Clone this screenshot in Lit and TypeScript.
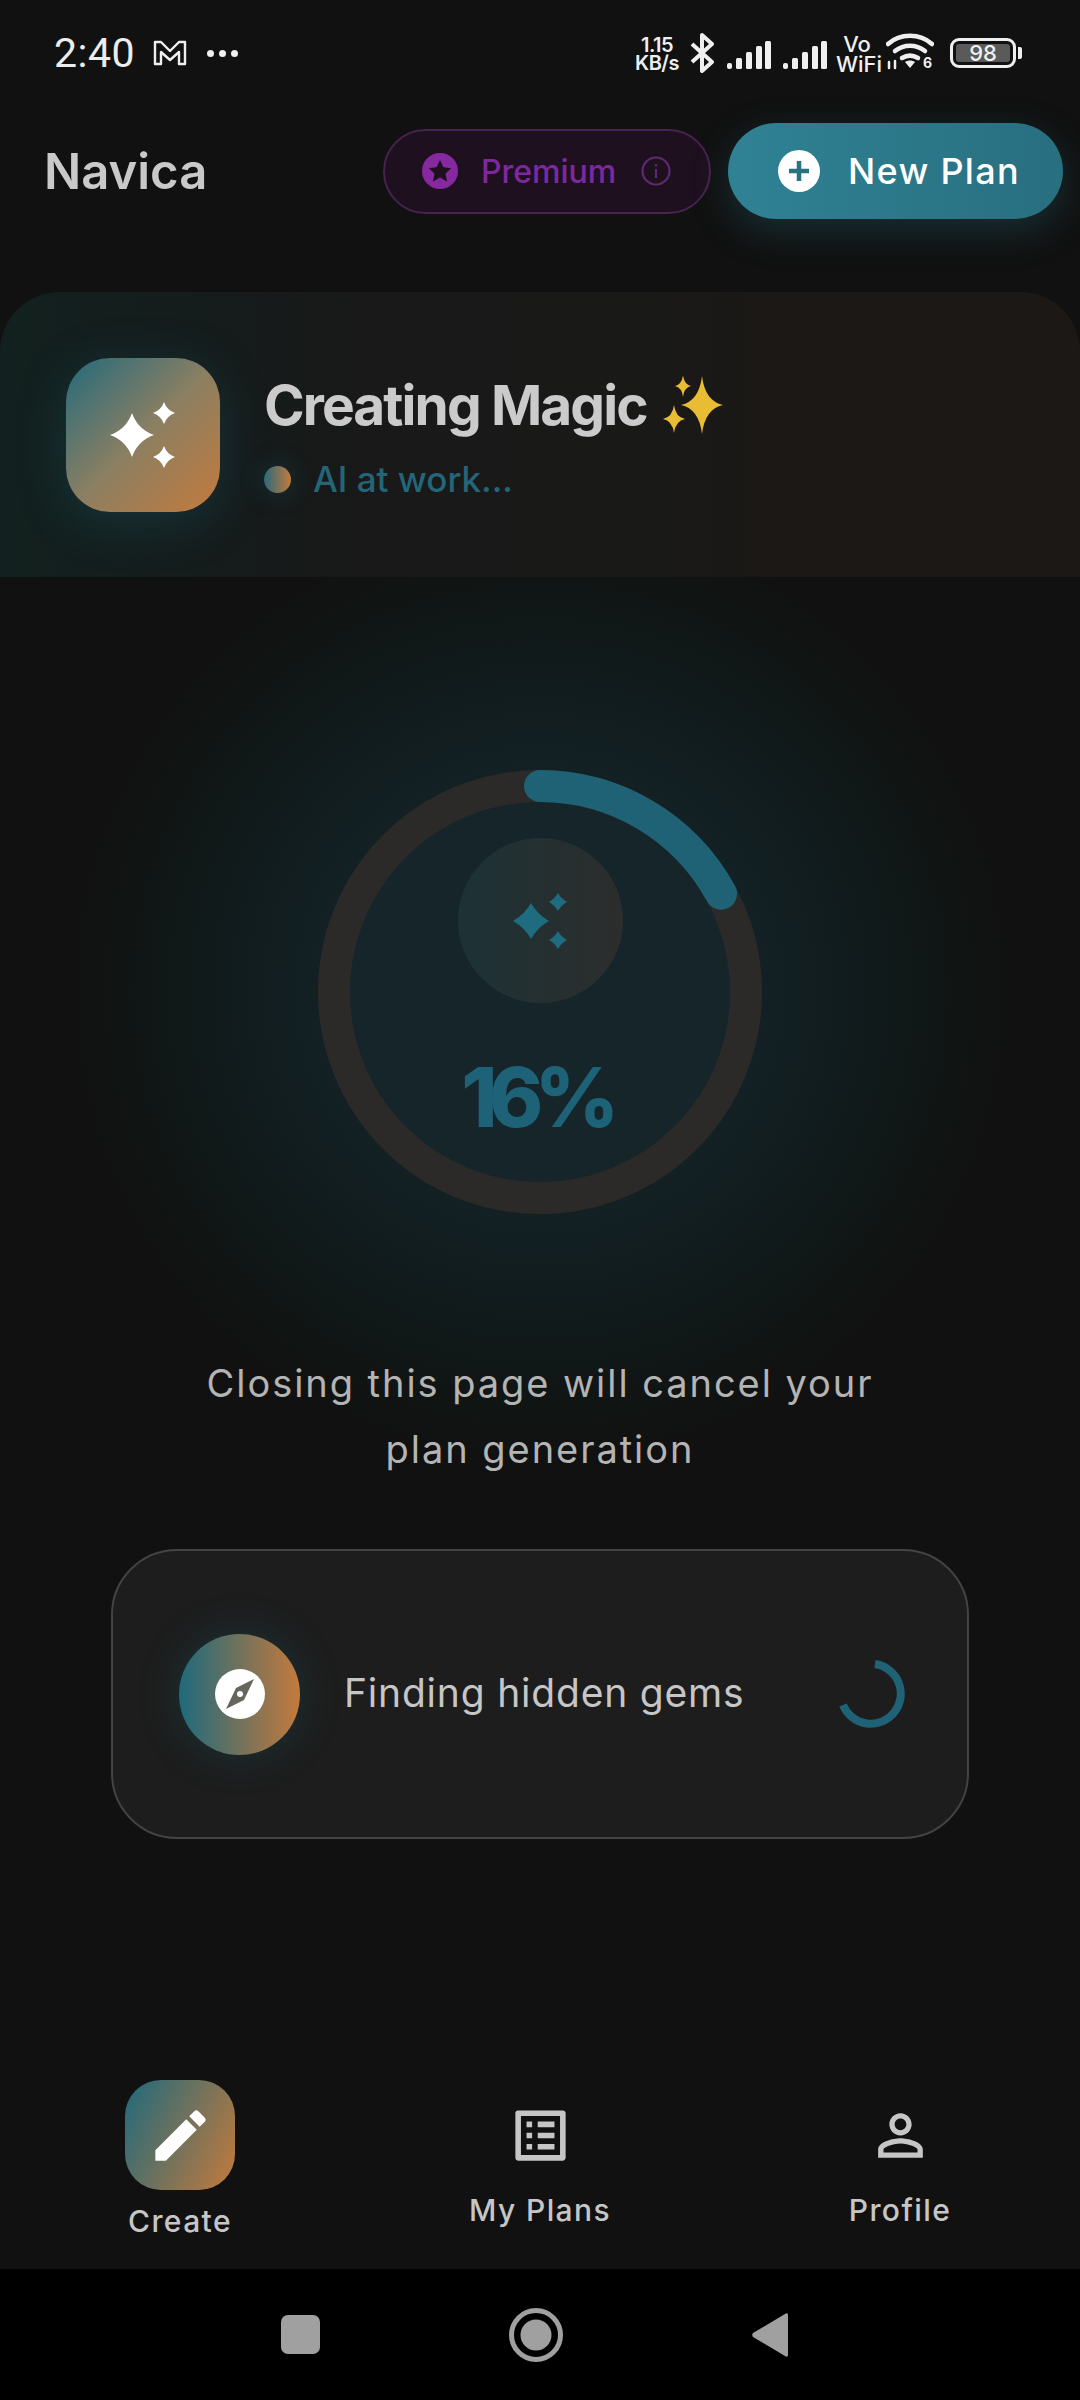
import { LitElement, html, css, svg } from "lit";
import { customElement } from "lit/decorators.js";

const star = (cx: number, cy: number, rx: number, ry: number = rx, k = 0.2) =>
  `M${cx} ${cy - ry}Q${cx + rx * k} ${cy - ry * k} ${cx + rx} ${cy}Q${cx + rx * k} ${cy + ry * k} ${cx} ${cy + ry}Q${cx - rx * k} ${cy + ry * k} ${cx - rx} ${cy}Q${cx - rx * k} ${cy - ry * k} ${cx} ${cy - ry}Z`;

const signal = () => html`<svg class="sig" width="44" height="28" viewBox="0 0 44 28" fill="#efefef">
  <rect x="0" y="22" width="5" height="6" rx="2"></rect>
  <rect x="9" y="17" width="6" height="11" rx="1.5"></rect>
  <rect x="19" y="11" width="6" height="17" rx="1.5"></rect>
  <rect x="29" y="5" width="6" height="23" rx="1.5"></rect>
  <rect x="38" y="0" width="6" height="28" rx="1.5"></rect>
</svg>`;

@customElement("app-root")
export class AppRoot extends LitElement {
  static styles = css`
    :host { display: flex; flex-direction: column; width: 1080px; height: 2400px; background: #111111; overflow: hidden; font-family: Inter, "Liberation Sans", sans-serif; color: #c8c8c8; }
    svg { display: block; flex: none; }

    .status { height: 106px; flex: none; display: flex; align-items: center; padding: 0 58px 0 54px; box-sizing: border-box; color: #efefef; }
    .time { font-family: Roboto, sans-serif; font-size: 41px; font-weight: 400; letter-spacing: 0.5px; width: 99px; color: #ececec; }
    .mail { margin-right: 20px; }
    .dots { display: flex; gap: 5px; }
    .dots i { width: 7px; height: 7px; border-radius: 50%; background: #efefef; }
    .status-right { margin-left: auto; display: flex; align-items: center; }
    .speed { font-size: 20px; font-weight: 600; line-height: 18px; text-align: center; width: 46px; letter-spacing: -0.5px; margin-top: 2px; }
    .bt { margin: 0 13px 0 10px; }
    .sig { margin: 3px 12px 0 0; }
    .vo { font-size: 22px; font-weight: 500; line-height: 20px; text-align: center; width: 42px; margin: 2px 8px 0 -3px; }
    .vo span { display: block; }
    .wifi { margin-right: 16px; }
    .battery { width: 66px; height: 30px; box-sizing: border-box; border: 3px solid #efefef; border-radius: 9px; padding: 3px; display: flex; }
    .battery span { flex: 1; background: #5a5a5a; border-radius: 3px; font-size: 22px; line-height: 18px; font-weight: 500; text-align: center; }
    .tip { width: 4px; height: 12px; background: #efefef; border-radius: 0 2px 2px 0; margin-left: 2px; }

    .header { flex: none; display: flex; align-items: center; padding: 17px 17px 0 44px; height: 96px; margin-bottom: 73px; }
    .brand { font-size: 49px; font-weight: 600; color: #c9c9c9; margin-right: auto; }
    .premium { display: flex; align-items: center; box-sizing: border-box; width: 328px; height: 85px; padding-left: 37px; border: 2px solid #47234f; border-radius: 43px; background: #1e101f; color: #7e28a0; font-size: 32px; font-weight: 500; }
    .premium .label { margin: 0 25px 0 23px; }
    .newplan { display: flex; align-items: center; box-sizing: border-box; width: 335px; height: 96px; margin-left: 17px; padding-left: 50px; border-radius: 48px; background: linear-gradient(90deg, #2f8294, #286f80); color: #fff; font-size: 36px; font-weight: 500; letter-spacing: 1.3px; box-shadow: 0 12px 36px rgba(38,100,115,0.35); gap: 28px; }

    .card { flex: none; height: 285px; box-sizing: border-box; display: flex; align-items: center; padding-left: 66px; gap: 44px; border-radius: 60px 60px 0 0; background: linear-gradient(90deg, #12211f 0%, #151c1c 18%, #181918 34%, #191918 60%, #1b1815 72%, #1b1815 100%); }
    .magic { width: 154px; height: 154px; flex: none; border-radius: 44px; background: linear-gradient(135deg, #236a7c 0%, #8b7f62 50%, #c47a3c 100%); box-shadow: 0 10px 50px rgba(31,98,117,0.32); display: flex; align-items: center; justify-content: center; }
    .title { display: flex; align-items: center; gap: 16px; font-size: 55px; font-weight: 700; letter-spacing: -1.9px; color: #cbcbcb; line-height: 70px; }
    .sub { display: flex; align-items: center; gap: 22px; margin-top: 19px; font-size: 35px; font-weight: 500; color: #246578; line-height: 40px; }
    .dot { width: 27px; height: 27px; border-radius: 50%; background: linear-gradient(90deg, #2a6a7a, #c47a3c); box-shadow: 0 0 24px rgba(31,98,117,0.4); }

    .main { flex: 1; display: flex; flex-direction: column; align-items: center; padding-top: 193px; background: radial-gradient(circle 470px at 540px 414px, #15252a 0%, #15252a 40%, #132124 47%, #111c1e 64%, #101615 85%, #111111 100%); }
    .ring { position: relative; width: 444px; height: 444px; display: flex; flex-direction: column; align-items: center; }
    .ring-svg { position: absolute; inset: 0; }
    .halo { position: relative; width: 165px; height: 165px; margin-top: 68px; border-radius: 50%; background: linear-gradient(90deg, #1d3236, #2c2d2c); display: flex; align-items: center; justify-content: center; }
    .pct { position: relative; margin: 45px 8px 0 0; font-size: 82px; line-height: 100px; font-weight: 800; letter-spacing: -8.5px; color: #1e6277; }
    .note { margin: 136px 0 0; font-size: 38px; line-height: 66px; letter-spacing: 1.95px; text-align: center; color: #b4b4b4; }
    .step { margin-top: 67px; box-sizing: border-box; width: 858px; height: 290px; border: 2.5px solid #434343; border-radius: 66px; background: #1d1d1d; display: flex; align-items: center; padding: 0 62px 0 66px; }
    .step-ico { width: 121px; height: 121px; border-radius: 50%; flex: none; background: linear-gradient(90deg, #1f6a7c, #c47a3c); box-shadow: 0 0 40px rgba(31,98,117,0.3); display: flex; align-items: center; justify-content: center; }
    .step-text { margin-left: 44px; font-size: 39px; font-weight: 400; letter-spacing: 0.8px; color: #c6c6c6; flex: 1; line-height: 44px; padding-bottom: 2px; }

    .nav { flex: none; display: grid; grid-template-columns: repeat(3, 1fr); height: 249px; box-sizing: border-box; background: #111111; }
    .item { display: flex; flex-direction: column; align-items: center; font-size: 30px; font-weight: 500; letter-spacing: 1.4px; color: #c6c6c6; line-height: 40px; padding-top: 60px; }
    .item.plain { padding-top: 82px; }
    .item.plain svg { margin-bottom: 21px; }
    .active-ico { width: 110px; height: 110px; border-radius: 36px; background: linear-gradient(115deg, #1f6a7c, #c47a3c); display: flex; align-items: center; justify-content: center; margin-bottom: 11px; }

    .sys { flex: none; height: 131px; background: #000; display: flex; align-items: center; justify-content: center; gap: 189px; padding-right: 12px; }
    .sq { width: 39px; height: 39px; border-radius: 7px; background: #a0a0a0; }
  `;

  render() {
    return html`
      <div class="status">
        <span class="time">2:40</span>
        <svg class="mail" width="34" height="26" viewBox="0 0 34 26" fill="none" stroke="#efefef" stroke-width="2.4" stroke-linejoin="round"><path d="M2 2h6l9 9 9-9h6v22h-6V12l-9 8-9-8v12H2z"></path></svg>
        <span class="dots"><i></i><i></i><i></i></span>
        <div class="status-right">
          <div class="speed">1.15<br />KB/s</div>
          <svg class="bt" width="24" height="40" viewBox="0 0 24 40" fill="none" stroke="#efefef" stroke-width="4" stroke-linejoin="round"><path d="M2 11l20 18-10 9V2l10 9L2 29"></path></svg>
          ${signal()}${signal()}
          <div class="vo"><span>Vo</span><span>WiFi</span></div>
          <svg class="wifi" width="48" height="40" viewBox="0 0 48 40" fill="none" stroke="#efefef" stroke-width="4.5" stroke-linecap="round"><path d="M2 11C14 0 34 0 46 11"></path><path d="M9 18c9-7 21-7 30 0"></path><path d="M16 25c5-3 11-3 16 0"></path><path d="M24 35l-5-6c3-2 7-2 10 0z" fill="#efefef" stroke="none"></path><path d="M3 29v6M9 28v7" stroke-width="2.5"></path><text x="37" y="35" font-size="14" font-weight="700" fill="#efefef" stroke="none" font-family="Inter">6</text></svg>
          <div class="battery"><span>98</span></div><div class="tip"></div>
        </div>
      </div>

      <div class="header">
        <div class="brand">Navica</div>
        <div class="premium">
          <svg width="36" height="36" viewBox="0 0 36 36"><circle cx="18" cy="18" r="18" fill="#86289f"></circle><path d="M18 7l3.4 7.2 7.8 1-5.7 5.4 1.5 7.8-7-3.8-7 3.8 1.5-7.8-5.7-5.4 7.8-1z" fill="#1e101f"></path></svg>
          <span class="label">Premium</span>
          <svg width="30" height="30" viewBox="0 0 30 30" fill="none" stroke="#5d2a70" stroke-width="2.2"><circle cx="15" cy="15" r="13.5"></circle><path d="M15 13v9M15 8v2.5"></path></svg>
        </div>
        <div class="newplan">
          <svg width="42" height="42" viewBox="0 0 42 42"><circle cx="21" cy="21" r="21" fill="#fff"></circle><path d="M21 11v20M11 21h20" stroke="#2a7282" stroke-width="4.5"></path></svg>
          <span>New Plan</span>
        </div>
      </div>

      <div class="card">
        <div class="magic">
          <svg width="66" height="66" viewBox="0 0 66 66" fill="#fff"><path d="${star(22, 33, 22, 22, 0.26)}"></path><path d="${star(54, 11, 11, 11, 0.26)}"></path><path d="${star(54, 55, 11, 11, 0.26)}"></path></svg>
        </div>
        <div>
          <div class="title">Creating Magic
            <svg width="60" height="58" viewBox="0 0 60 58" fill="#e9bd33"><path d="${star(39, 29, 21, 29, 0.14)}"></path><path d="${star(20, 10, 8, 11, 0.14)}"></path><path d="${star(11, 43, 11, 14, 0.14)}"></path></svg>
          </div>
          <div class="sub"><span class="dot"></span><span>AI at work...</span></div>
        </div>
      </div>

      <div class="main">
        <div class="ring">
          <svg class="ring-svg" width="444" height="444" viewBox="0 0 444 444" fill="none" stroke-width="32">
            ${svg`<circle cx="222" cy="222" r="206" stroke="#2b2a29"></circle>
            <circle cx="222" cy="222" r="206" stroke="#1f6275" stroke-linecap="round" stroke-dasharray="221 1294" transform="rotate(-90 222 222)"></circle>`}
          </svg>
          <div class="halo">
            <svg width="54" height="56" viewBox="0 0 54 56" fill="#1f6b80"><path d="${star(18, 28, 18, 18, 0.36)}"></path><path d="${star(45, 9, 9, 9, 0.36)}"></path><path d="${star(45, 47, 9, 9, 0.36)}"></path></svg>
          </div>
          <div class="pct">16%</div>
        </div>
        <p class="note">Closing this page will cancel your<br />plan generation</p>
        <div class="step">
          <div class="step-ico">
            <svg width="50" height="50" viewBox="0 0 50 50"><circle cx="25" cy="25" r="25" fill="#fff"></circle><path d="M39 10L29 31 11 40 21 19z" fill="#66665c"></path><circle cx="25" cy="25" r="3" fill="#fff"></circle></svg>
          </div>
          <div class="step-text">Finding hidden gems</div>
          <svg width="68" height="72" viewBox="0 0 68 72" fill="none" stroke="#1f6275" stroke-width="8"><path d="M38 6A30 30 0 1 1 6 47"></path></svg>
        </div>
      </div>

      <div class="nav">
        <div class="item">
          <div class="active-ico"><svg width="67" height="67" viewBox="0 0 24 24" fill="#fff"><path d="M3 17.25V21h3.75L17.81 9.94l-3.75-3.75L3 17.25zM20.71 7.04c.39-.39.39-1.02 0-1.41l-2.34-2.34c-.39-.39-1.02-.39-1.41 0l-1.83 1.83 3.75 3.75 1.83-1.83z"></path></svg></div>
          <span>Create</span>
        </div>
        <div class="item plain">
          <svg width="67" height="67" viewBox="0 0 24 24" fill="#c6c6c6"><path d="M19 5v14H5V5h14m1.1-2H3.9c-.5 0-.9.4-.9.9v16.2c0 .4.4.9.9.9h16.2c.4 0 .9-.5.9-.9V3.9c0-.5-.5-.9-.9-.9zM11 7h6v2h-6V7zm0 4h6v2h-6v-2zm0 4h6v2h-6zM7 7h2v2H7zm0 4h2v2H7zm0 4h2v2H7z"></path></svg>
          <span>My Plans</span>
        </div>
        <div class="item plain">
          <svg width="67" height="67" viewBox="0 0 24 24" fill="#c6c6c6"><path d="M12 5.9c1.16 0 2.1.94 2.1 2.1s-.94 2.1-2.1 2.1S9.9 9.16 9.9 8s.94-2.1 2.1-2.1m0 9c2.97 0 6.1 1.46 6.1 2.1v1.1H5.9V17c0-.64 3.13-2.1 6.1-2.1M12 4C9.79 4 8 5.79 8 8s1.79 4 4 4 4-1.79 4-4-1.79-4-4-4zm0 9c-2.67 0-8 1.34-8 4v3h16v-3c0-2.66-5.33-4-8-4z"></path></svg>
          <span>Profile</span>
        </div>
      </div>

      <div class="sys">
        <div class="sq"></div>
        <svg width="54" height="54" viewBox="0 0 54 54"><circle cx="27" cy="27" r="24.5" fill="none" stroke="#a0a0a0" stroke-width="5"></circle><circle cx="27" cy="27" r="15.5" fill="#a0a0a0"></circle></svg>
        <svg width="36" height="44" viewBox="0 0 36 44"><path d="M36 2v40c0 2-2 2-3 1L1 24c-1-1-1-3 0-4L33 1c1-1 3-1 3 1z" fill="#a0a0a0"></path></svg>
      </div>
    `;
  }
}
